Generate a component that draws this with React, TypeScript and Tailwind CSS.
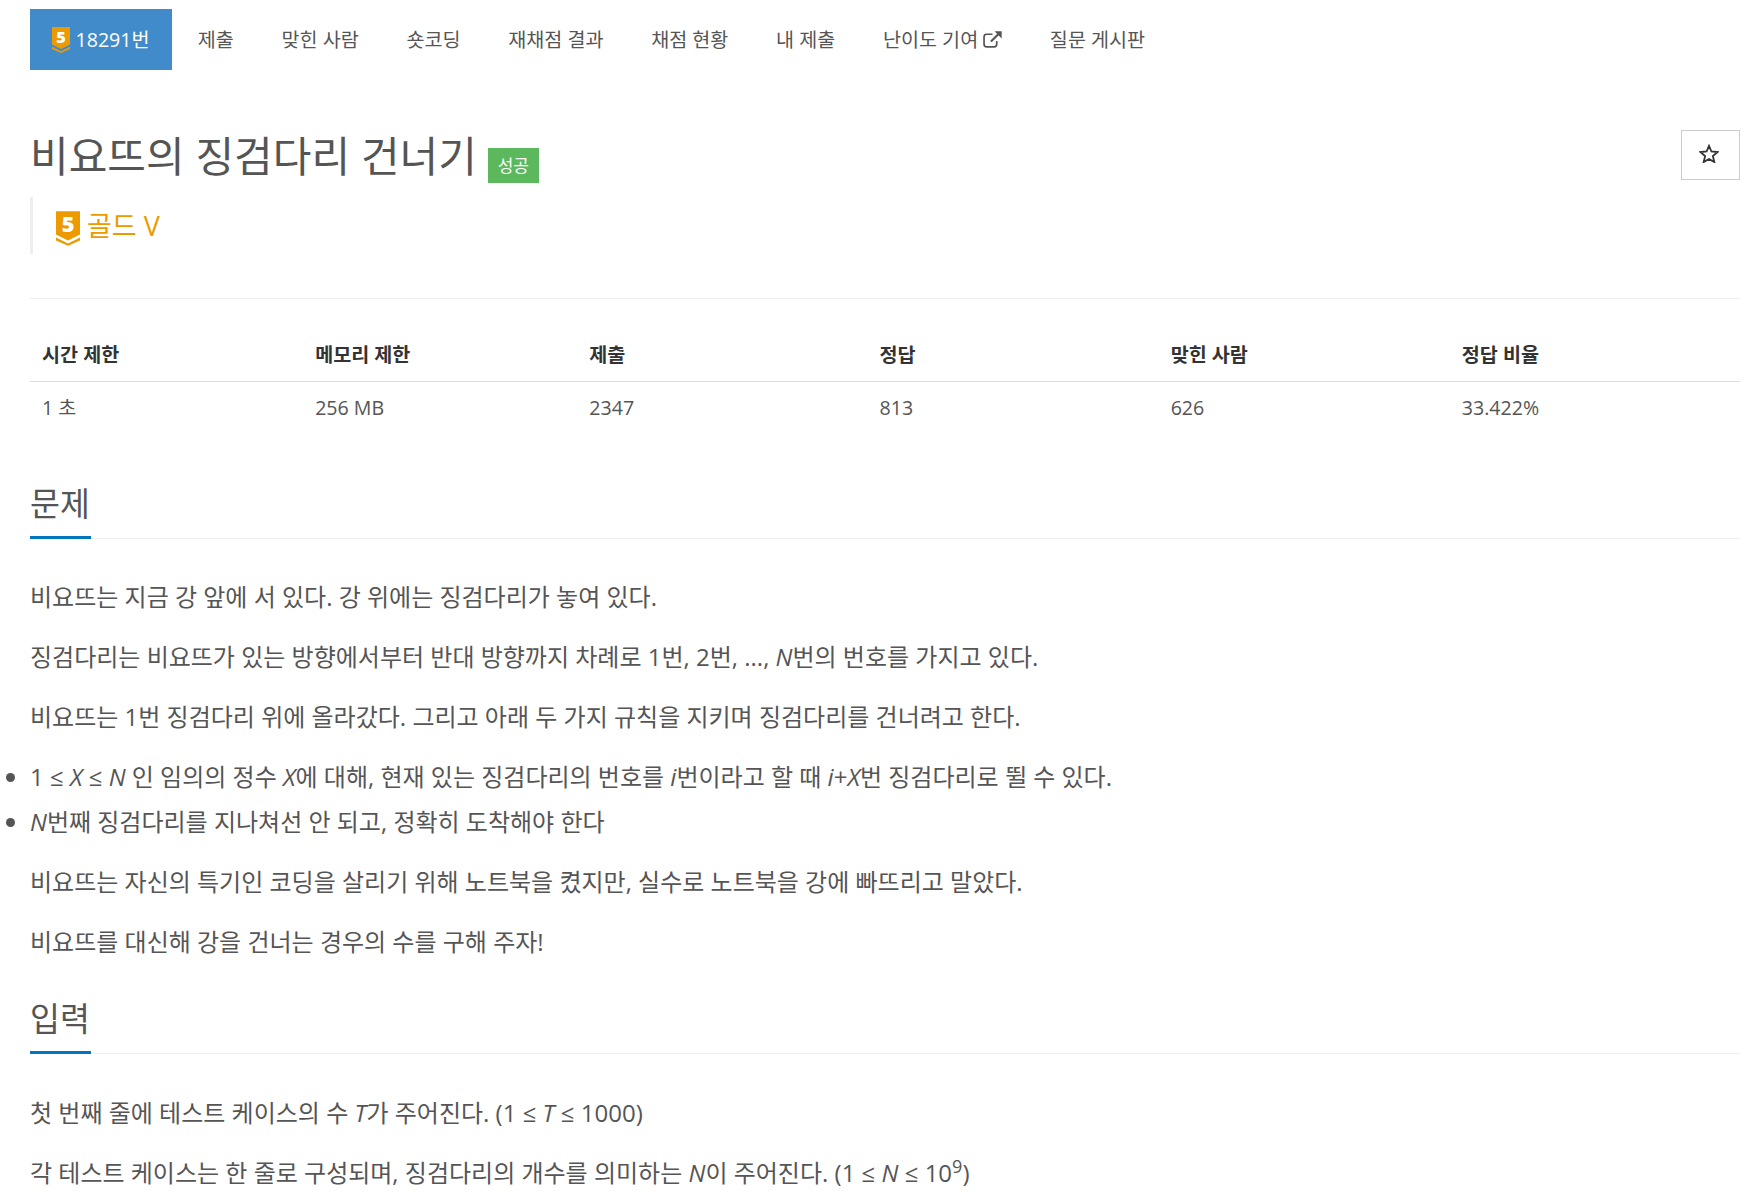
const FONT = "font-['Open_Sans','Noto_Sans_CJK_KR',sans-serif]";

const tabs = ["제출", "맞힌 사람", "숏코딩", "재채점 결과", "채점 현황", "내 제출"];

function TierBadge({ className, fill }: { className: string; fill: string }) {
  return (
    <svg viewBox="0 0 16 23" className={className}>
      <path d="M0 0H16V15.5L8 19.5L0 15.5Z" fill={fill} />
      <path d="M0 17.5L8 21.5L16 17.5V19.5L8 23L0 19.5Z" fill={fill} />
      <text x="8" y="14" textAnchor="middle" fontSize="14.5" fontWeight="800" fill="#fff" fontFamily="Open Sans, sans-serif">
        5
      </text>
    </svg>
  );
}

function ExternalLink() {
  return (
    <svg viewBox="0 0 18 16" className="ml-[5px] inline-block h-[17px] w-[19px] align-[-1px]">
      <path d="M9 3H3.5C2.1 3 1 4.1 1 5.5V12.5C1 13.9 2.1 15 3.5 15H10.5C11.9 15 13 13.9 13 12.5V9.5" fill="none" stroke="#555" strokeWidth="1.6" />
      <path d="M7.5 10L14.5 3" fill="none" stroke="#555" strokeWidth="2" />
      <path d="M11 0.3H17.7V7Z" fill="#555" />
    </svg>
  );
}

function SectionHeading({ children }: { children: string }) {
  return (
    <div className="mb-[40px] border-b border-[#eee]">
      <h2 className="-mb-px inline-block h-[53px] border-b-[3px] border-[#0076c0] pr-[1px] text-[32.5px] leading-[36px] font-normal text-[#555]">
        {children}
      </h2>
    </div>
  );
}

function V({ children }: { children: string }) {
  return <i className="italic">{children}</i>;
}

export default function App() {
  return (
    <div className={`${FONT} min-h-screen overflow-hidden bg-white pr-[6px] pl-[30px] text-[#555]`}>
      <nav className="mt-[9px] flex h-[61px] items-center text-[19.6px]">
        <div className="mr-[2px] flex h-full w-[142px] items-center justify-center bg-[#428bca] text-white">
          <TierBadge className="mr-[5px] h-[26px] w-[18px]" fill="#ec9a00" />
          18291번
        </div>
        {tabs.map((t) => (
          <span key={t} className="px-[23.85px]">
            {t}
          </span>
        ))}
        <span className="px-[23.85px]">
          난이도 기여
          <ExternalLink />
        </span>
        <span className="px-[23.85px]">질문 게시판</span>
      </nav>

      <div className="mt-[63px] flex items-start justify-between">
        <div className="flex items-start">
          <h1 className="text-[42px] leading-[46px] font-normal">비요뜨의 징검다리 건너기</h1>
          <span className="mt-[15px] ml-[11px] flex h-[35px] w-[51px] items-center justify-center bg-[#5cb85c] text-[17px] text-white">
            성공
          </span>
        </div>
        <button className="-mt-[3px] flex h-[50px] w-[59px] items-center justify-center border border-[#ccc] bg-white pr-[3px] pb-1">
          <svg viewBox="0 0 22 21" className="h-[19px] w-5">
            <path d="M11 2L13.7 8.3L20.5 8.9L15.3 13.4L16.9 20L11 16.5L5.1 20L6.7 13.4L1.5 8.9L8.3 8.3Z" fill="none" stroke="#333" strokeWidth="2" />
          </svg>
        </button>
      </div>

      <div className="mt-[13.5px] flex h-[57px] items-center border-l-[3px] border-[#eee] pt-[3px] pl-[23px] text-[27px] text-[#ec9a00]">
        <TierBadge className="mt-[3px] mr-[7px] h-[37px] w-6" fill="#ec9a00" />
        골드 V
      </div>

      <div className="mt-[44px] border-b border-[#eee]" />

      <table className="mt-[29px] w-full table-fixed text-[19.6px]">
        <colgroup>
          <col className="w-[273px]" />
          <col className="w-[274px]" />
          <col className="w-[290px]" />
          <col className="w-[291px]" />
          <col className="w-[291px]" />
          <col className="w-[290px]" />
        </colgroup>
        <thead>
          <tr className="border-b border-[#ddd]">
            {["시간 제한", "메모리 제한", "제출", "정답", "맞힌 사람", "정답 비율"].map((h) => (
              <th key={h} className="h-[54px] px-3 text-left font-bold text-[#333]">
                {h}
              </th>
            ))}
          </tr>
        </thead>
        <tbody>
          <tr>
            {["1 초", "256 MB", "2347", "813", "626", "33.422%"].map((c) => (
              <td key={c} className="h-[52px] px-3">
                {c}
              </td>
            ))}
          </tr>
        </tbody>
      </table>

      <div className="mt-[52px]">
        <SectionHeading>문제</SectionHeading>
        <div className="text-[24px] leading-[36px]">
          <p className="mb-6">비요뜨는 지금 강 앞에 서 있다. 강 위에는 징검다리가 놓여 있다.</p>
          <p className="mb-6">
            징검다리는 비요뜨가 있는 방향에서부터 반대 방향까지 차례로 1번, 2번, ..., <V>N</V>번의 번호를 가지고 있다.
          </p>
          <p className="mb-6">비요뜨는 1번 징검다리 위에 올라갔다. 그리고 아래 두 가지 규칙을 지키며 징검다리를 건너려고 한다.</p>
          <ul className="mb-6 list-disc">
            <li className="mb-[9px]">
              1 ≤ <V>X</V> ≤ <V>N</V> 인 임의의 정수 <V>X</V>에 대해, 현재 있는 징검다리의 번호를 <V>i</V>번이라고 할 때 <V>i</V>+<V>X</V>번 징검다리로 뛸 수 있다.
            </li>
            <li>
              <V>N</V>번째 징검다리를 지나쳐선 안 되고, 정확히 도착해야 한다
            </li>
          </ul>
          <p className="mb-6">비요뜨는 자신의 특기인 코딩을 살리기 위해 노트북을 켰지만, 실수로 노트북을 강에 빠뜨리고 말았다.</p>
          <p>비요뜨를 대신해 강을 건너는 경우의 수를 구해 주자!</p>
        </div>
      </div>

      <div className="mt-[41px]">
        <div className="mb-[41px] border-b border-[#eee]">
          <h2 className="-mb-px inline-block h-[53px] border-b-[3px] border-[#0076c0] pr-[1px] text-[32.5px] leading-[36px] font-normal text-[#555]">
            입력
          </h2>
        </div>
        <div className="text-[24px] leading-[36px]">
          <p className="mb-6">
            첫 번째 줄에 테스트 케이스의 수 <V>T</V>가 주어진다. (1 ≤ <V>T</V> ≤ 1000)
          </p>
          <p>
            각 테스트 케이스는 한 줄로 구성되며, 징검다리의 개수를 의미하는 <V>N</V>이 주어진다. (1 ≤ <V>N</V> ≤ 10
            <sup className="text-[18px]">9</sup>)
          </p>
        </div>
      </div>
    </div>
  );
}
